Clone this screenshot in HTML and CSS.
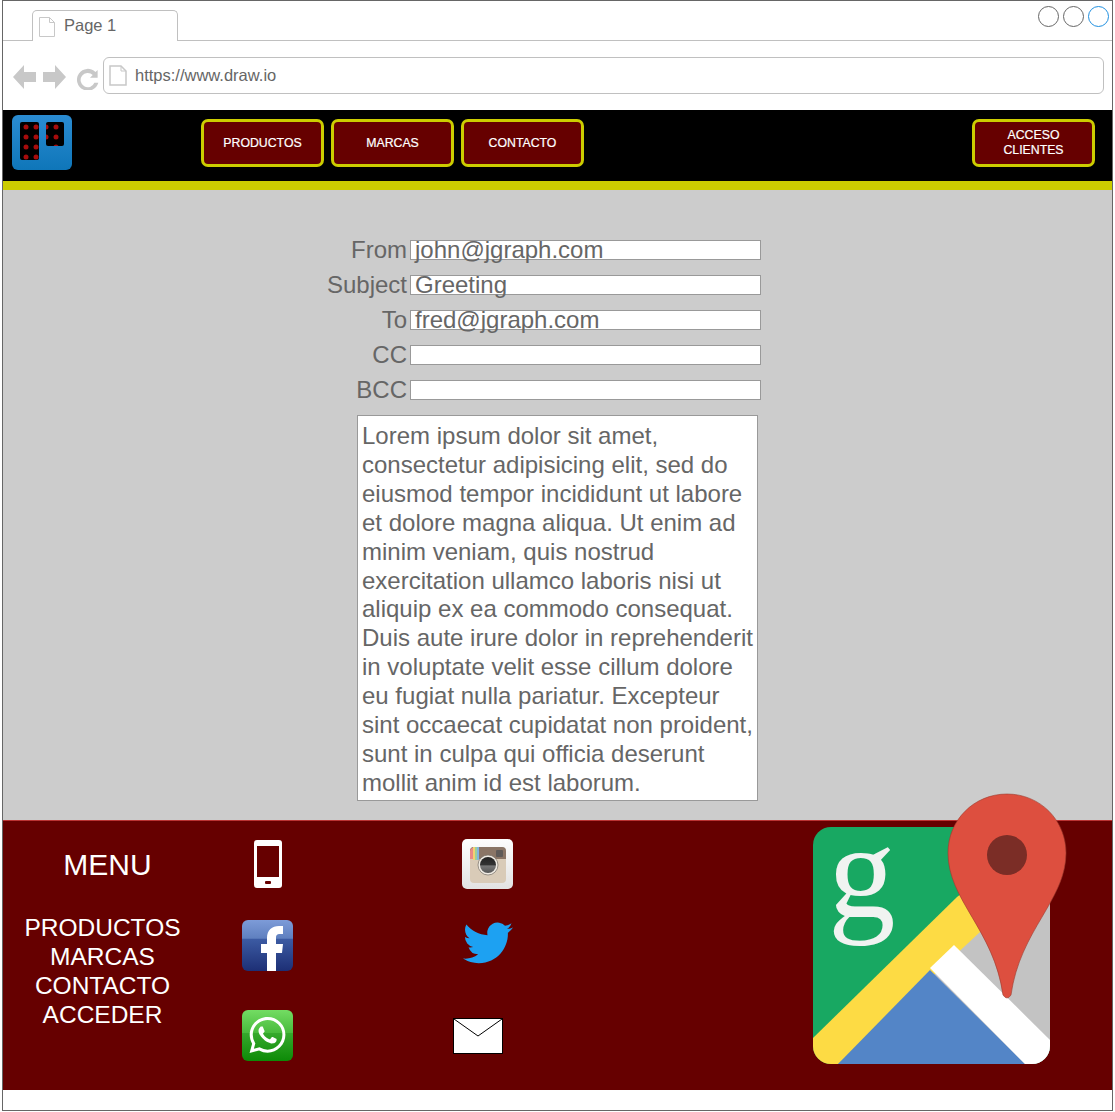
FILE: index.html
```html
<!DOCTYPE html>
<html lang="en">
<head>
  <meta charset="UTF-8" />
  <title>Contacto</title>
  <link rel="stylesheet" href="styles.css">
</head>
<body>
<div class="window">

  <!-- Browser chrome -->
  <div class="tab-strip">
    <div class="tab">
      <svg class="page-icon" width="16" height="20" viewBox="0 0 16 20"><path d="M.5.5h10l5 5v14H.5z" fill="#fff" stroke="#c8c8c8"/><path d="M10.5.5v5h5" fill="none" stroke="#c8c8c8"/></svg>
      <span>Page 1</span>
    </div>
    <div class="win-buttons">
      <span class="win-btn"></span>
      <span class="win-btn"></span>
      <span class="win-btn blue"></span>
    </div>
  </div>
  <div class="toolbar">
    <svg class="nav-icons" width="86" height="26" viewBox="0 0 86 26" fill="#c8c8c8">
      <path d="M0 13 11 1v7h12v10H11v7z"/>
      <path d="M53 13 42 1v7H30v10h12v7z"/>
      <path d="M82 5.500v7.500h-7.500l2.700-2.700a7 7 0 1 0 1.600 7.700h3.900a10.700 10.700 0 1 1-2.800-10.700z" transform="translate(1 .5) scale(1.02)"/>
    </svg>
    <div class="address">
      <svg width="18" height="21" viewBox="0 0 18 21"><path d="M1 1h11l5 5v14H1z" fill="#fff" stroke="#c8c8c8" stroke-width="1.500"/><path d="M12 1v5h5" fill="none" stroke="#c8c8c8"/></svg>
      <span>https://www.draw.io</span>
    </div>
  </div>

  <!-- Header -->
  <header class="top-nav">
    <svg class="logo" width="60" height="55" viewBox="0 0 60 55">
      <defs>
        <linearGradient id="logoBlue" x1="0" y1="0" x2="0" y2="1"><stop offset="0" stop-color="#2a8cd2"/><stop offset="1" stop-color="#0f76b9"/></linearGradient>
        <clipPath id="logoRight"><rect x="34" y="7" width="18" height="24" rx="2"/></clipPath>
      </defs>
      <rect width="60" height="55" rx="6" fill="url(#logoBlue)"/>
      <rect x="8" y="7" width="19" height="38" rx="2"/>
      <rect x="34" y="7" width="18" height="24" rx="2"/>
      <g fill="#a80c0c">
        <circle cx="14" cy="12" r="2.500"/><circle cx="24" cy="12" r="2.500"/>
        <circle cx="14" cy="22" r="2.500"/><circle cx="24" cy="22" r="2.500"/>
        <circle cx="14" cy="32" r="2.500"/><circle cx="24" cy="32" r="2.500"/>
        <circle cx="14" cy="42" r="2.500"/><circle cx="24" cy="42" r="2.500"/>
        <g clip-path="url(#logoRight)">
          <circle cx="34" cy="12" r="2.500"/><circle cx="44" cy="12" r="2.500"/>
          <circle cx="34" cy="22" r="2.500"/><circle cx="44" cy="22" r="2.500"/>
          <circle cx="44" cy="32" r="2.500"/>
        </g>
      </g>
    </svg>
    <nav class="nav-main">
      <a class="nav-btn">PRODUCTOS</a>
      <a class="nav-btn">MARCAS</a>
      <a class="nav-btn">CONTACTO</a>
    </nav>
    <a class="nav-btn login">ACCESO<br>CLIENTES</a>
  </header>

  <!-- Mail form -->
  <main class="content">
    <form class="mail-form">
      <div class="row"><label>From</label><div class="field">john@jgraph.com</div></div>
      <div class="row"><label>Subject</label><div class="field">Greeting</div></div>
      <div class="row"><label>To</label><div class="field">fred@jgraph.com</div></div>
      <div class="row"><label>CC</label><div class="field"></div></div>
      <div class="row"><label>BCC</label><div class="field"></div></div>
      <div class="message">Lorem ipsum dolor sit amet, consectetur adipisicing elit, sed do eiusmod tempor incididunt ut labore et dolore magna aliqua. Ut enim ad minim veniam, quis nostrud exercitation ullamco laboris nisi ut aliquip ex ea commodo consequat. Duis aute irure dolor in reprehenderit in voluptate velit esse cillum dolore eu fugiat nulla pariatur. Excepteur sint occaecat cupidatat non proident, sunt in culpa qui officia deserunt mollit anim id est laborum.</div>
    </form>
  </main>

  <!-- Footer -->
  <footer class="footer">
    <div class="foot-menu">
      <div class="foot-title">MENU</div>
      <div class="foot-links">PRODUCTOS<br>MARCAS<br>CONTACTO<br>ACCEDER</div>
    </div>

    <div class="icons-a">
      <svg class="phone" width="28" height="48" viewBox="0 0 28 48">
        <rect width="28" height="48" rx="3" fill="#fff"/>
        <rect x="3" y="6" width="22" height="31" fill="#660000"/>
        <rect x="11" y="41" width="6" height="3" rx="1" fill="#660000"/>
      </svg>
      <svg class="facebook" width="51" height="51" viewBox="0 0 51 51">
        <defs>
          <linearGradient id="fbBlue" x1="0" y1="0" x2="0" y2="1"><stop offset="0" stop-color="#7d9bd8"/><stop offset=".36" stop-color="#5f80bf"/><stop offset=".37" stop-color="#3c5ba3"/><stop offset="1" stop-color="#1d2f75"/></linearGradient>
        </defs>
        <rect width="51" height="51" rx="6" fill="url(#fbBlue)"/>
        <path d="M25 51V33h-6v-9h6v-6c0-8 5-12 12-12h4v8h-3c-3 0-4 1-4 4v6h7l-1 9h-6v18z" fill="#fff"/>
      </svg>
      <svg class="whatsapp" width="51" height="51" viewBox="0 0 51 51">
        <defs>
          <linearGradient id="waGreen" x1="0" y1="0" x2="0" y2="1"><stop offset="0" stop-color="#73dc63"/><stop offset=".45" stop-color="#48bb3c"/><stop offset=".46" stop-color="#35a92c"/><stop offset="1" stop-color="#0d8a07"/></linearGradient>
        </defs>
        <rect width="51" height="51" rx="6" fill="url(#waGreen)"/>
        <path transform="translate(7.500 7) scale(1.500)" fill="#fff" d="M17.472 14.382c-.297-.149-1.758-.867-2.030-.967-.273-.099-.471-.148-.670.150-.197.297-.767.966-.940 1.164-.173.199-.347.223-.644.075-.297-.150-1.255-.463-2.390-1.475-.883-.788-1.480-1.761-1.653-2.059-.173-.297-.018-.458.130-.606.134-.133.298-.347.446-.520.149-.174.198-.298.298-.497.099-.198.050-.371-.025-.520-.075-.149-.669-1.612-.916-2.207-.242-.579-.487-.500-.669-.510-.173-.008-.371-.010-.570-.010-.198 0-.520.074-.792.372-.272.297-1.040 1.016-1.040 2.479 0 1.462 1.065 2.875 1.213 3.074.149.198 2.096 3.200 5.077 4.487.709.306 1.262.489 1.694.625.712.227 1.360.195 1.871.118.571-.085 1.758-.719 2.006-1.413.248-.694.248-1.289.173-1.413-.074-.124-.272-.198-.570-.347m-5.421 7.403h-.004a9.870 9.870 0 01-5.031-1.378l-.361-.214-3.741.982.998-3.648-.235-.374a9.860 9.860 0 01-1.510-5.260c.001-5.450 4.436-9.884 9.888-9.884 2.640 0 5.122 1.030 6.988 2.898a9.825 9.825 0 012.893 6.994c-.003 5.450-4.437 9.884-9.885 9.884m8.413-18.297A11.815 11.815 0 0012.050 0C5.495 0 .160 5.335.157 11.892c0 2.096.547 4.142 1.588 5.945L.057 24l6.305-1.654a11.882 11.882 0 005.683 1.448h.005c6.554 0 11.890-5.335 11.893-11.893a11.821 11.821 0 00-3.480-8.413z"/>
      </svg>
    </div>

    <div class="icons-b">
      <svg class="instagram" width="51" height="50" viewBox="0 0 51 50">
        <defs>
          <linearGradient id="igBg" x1="0" y1="0" x2="0" y2="1"><stop offset="0" stop-color="#fdfdfd"/><stop offset="1" stop-color="#e2e2e2"/></linearGradient>
          <linearGradient id="igLens" x1="0" y1="0" x2="0" y2="1"><stop offset="0" stop-color="#222"/><stop offset=".5" stop-color="#333"/><stop offset=".55" stop-color="#777"/><stop offset="1" stop-color="#555"/></linearGradient>
        </defs>
        <rect width="51" height="50" rx="5" fill="url(#igBg)"/>
        <rect x="8" y="8" width="36" height="36" rx="4" fill="#d9cbb8"/>
        <path d="M12 8h28a4 4 0 0 1 4 4v8H32a9 9 0 0 0-13 0H8v-8a4 4 0 0 1 4-4z" fill="#8a7566"/>
        <path d="M8 20V12a4 4 0 0 1 2-3h1v11z" fill="#e98a86"/>
        <rect x="11" y="8" width="2" height="13" fill="#f3d070"/>
        <rect x="13" y="8" width="2" height="13" fill="#9ccf9a"/>
        <rect x="15" y="8" width="2" height="13" fill="#82b4df"/>
        <rect x="34" y="11" width="7" height="7" rx="1" fill="#5f5a58"/>
        <circle cx="26" cy="26" r="10" fill="#f0ebe3" stroke="#77716a" stroke-width=".7"/>
        <circle cx="26" cy="26" r="8" fill="url(#igLens)"/>
      </svg>
      <svg class="twitter" width="50" height="47" viewBox="0 0 24 22.500">
        <path transform="translate(0 -2)" fill="#1da1f2" d="M23.953 4.570a10 10 0 01-2.825.775 4.958 4.958 0 002.163-2.723c-.951.555-2.005.959-3.127 1.184a4.920 4.920 0 00-8.384 4.482C7.690 8.095 4.067 6.130 1.640 3.162a4.822 4.822 0 00-.666 2.475c0 1.710.870 3.213 2.188 4.096a4.904 4.904 0 01-2.228-.616v.060a4.923 4.923 0 003.946 4.827 4.996 4.996 0 01-2.212.085 4.936 4.936 0 004.604 3.417 9.867 9.867 0 01-6.102 2.105c-.390 0-.779-.023-1.170-.067a13.995 13.995 0 007.557 2.209c9.053 0 13.998-7.496 13.998-13.985 0-.210 0-.420-.015-.630A9.935 9.935 0 0024 4.590z"/>
      </svg>
      <svg class="mail" width="50" height="36" viewBox="0 0 50 36">
        <rect x=".5" y=".5" width="49" height="35" fill="#fff" stroke="#000"/>
        <path d="M1 1l24 17L49 1" fill="none" stroke="#000"/>
      </svg>
    </div>

    <svg class="map-icon" width="265" height="280" viewBox="805 790 265 280">
      <defs>
        <clipPath id="mapSquare"><rect x="813" y="827" width="237" height="237" rx="18"/></clipPath>
      </defs>
      <g clip-path="url(#mapSquare)">
        <rect x="813" y="827" width="237" height="237" fill="#18a862"/>
        <path d="M1050 827v237H838z" fill="#c3c3c3"/>
        <path d="M813 1038 957 897 1050 827v40L838 1064H813z" fill="#fddb44"/>
        <path d="M838 1064 930 970 1025 1064z" fill="#5385c7"/>
        <path d="M930 968 954 945 1050 1040v24H1025z" fill="#fff"/>
      </g>
      <text class="map-g" x="828" y="917">g</text>
      <path d="M1007 794C1040 794 1066 820 1066 853C1066 900 1020 930 1011 995Q1007 1001 1003 995C994 930 948 900 948 853C948 820 974 794 1007 794Z" fill="#dd4f3f" stroke="#9c3a2e" stroke-width=".6"/>
      <circle cx="1007" cy="855" r="20" fill="#7b2d26"/>
    </svg>
  </footer>

</div>
</body>
</html>
```

FILE: styles.css
```css
* {
  box-sizing: border-box;
  margin: 0;
  padding: 0;
}
body {
  background-color: #fff;
  padding-left: 2px;
  font-family: "Liberation Sans", Arial, sans-serif;
  color: #666;
}
.window {
  width: 1111px;
  height: 1111px;
  border: 1px solid #666;
  background-color: #fff;
}

/* browser chrome */
.tab-strip {
  display: flex;
  justify-content: space-between;
  height: 40px;
  padding: 9px 3px 0 29px;
  border-bottom: 1px solid #c0c0c0;
}
.tab {
  display: flex;
  align-items: center;
  gap: 9px;
  width: 146px;
  height: 31px;
  padding-left: 6px;
  font-size: 16.5px;
  border: 1px solid #c0c0c0;
  border-bottom: none;
  border-radius: 5px 5px 0 0;
  background-color: #fff;
}
.page-icon {
  margin-top: 2px;
}
.tab span {
  margin-top: -2px;
}
.win-buttons {
  display: flex;
  gap: 4px;
  margin-top: -4px;
}
.win-btn {
  width: 21px;
  height: 21px;
  border: 1px solid #666;
  border-radius: 50%;
}
.win-btn.blue {
  border-color: #1f8fe0;
}
.toolbar {
  display: flex;
  align-items: center;
  gap: 4px;
  height: 69px;
  padding: 0 8px 0 10px;
}
.nav-icons {
  flex: none;
  margin-top: 2px;
}
.address {
  display: flex;
  align-items: center;
  gap: 8px;
  flex: 1;
  height: 37px;
  padding-left: 5px;
  font-size: 16.5px;
  border: 1px solid #c0c0c0;
  border-radius: 6px;
}

/* header */
.top-nav {
  display: flex;
  align-items: flex-start;
  height: 80px;
  padding: 5px 17px 0 9px;
  background-color: #000;
  border-bottom: 9px solid #cccc00;
}
.nav-main {
  display: flex;
  gap: 7px;
  margin-left: 129px;
  margin-top: 4px;
}
.nav-btn {
  display: flex;
  align-items: center;
  justify-content: center;
  width: 123px;
  height: 48px;
  text-align: center;
  font-size: 12.300px;
  line-height: 15px;
  color: #fff;
  background-color: #660000;
  border: 3px solid #cccc00;
  border-radius: 7px;
  -webkit-text-stroke: .2px #fff;
}
.login {
  margin-left: auto;
  margin-top: 4px;
}

/* form */
.content {
  height: 631px;
  padding-top: 50px;
  background-color: #ccc;
  border-bottom: 1px solid #b33;
}
.mail-form {
  width: 758px;
  font-size: 24px;
}
.row {
  display: flex;
  justify-content: flex-end;
  gap: 3px;
  height: 35px;
}
.row label {
  height: 20px;
  line-height: 20px;
}
.field {
  width: 351px;
  height: 20px;
  padding-left: 4px;
  line-height: 18px;
  background-color: #fff;
  border: 1px solid #999;
}
.message {
  width: 401px;
  height: 386px;
  margin-left: 354px;
  padding: 6px 4px 0;
  line-height: 28.900px;
  background-color: #fff;
  border: 1px solid #999;
}

/* footer */
.footer {
  position: relative;
  display: flex;
  height: 269px;
  background-color: #660000;
  color: #fff;
}
.foot-menu {
  width: 199px;
  text-align: center;
}
.foot-title {
  margin: 26px 0 0 10px;
  font-size: 30px;
  line-height: 36px;
}
.foot-links {
  margin-top: 30px;
  font-size: 24.500px;
  line-height: 29px;
}
.icons-a,
.icons-b {
  display: flex;
  flex-direction: column;
  align-items: center;
  width: 51px;
}
.icons-a {
  margin-left: 40px;
}
.icons-b {
  margin-left: 169px;
}
.icons-a svg,
.icons-b svg {
  flex: none;
}
.phone {
  margin-top: 19px;
}
.facebook {
  margin-top: 32px;
}
.whatsapp {
  margin-top: 39px;
}
.instagram {
  margin-top: 18px;
}
.twitter {
  margin-top: 33px;
}
.mail {
  margin-top: 49px;
  margin-left: -20px;
}
.map-icon {
  position: absolute;
  left: 802px;
  top: -31px;
}
.map-g {
  font-family: "Liberation Serif", serif;
  font-size: 135px;
  fill: #f0f3f1;
}
```
